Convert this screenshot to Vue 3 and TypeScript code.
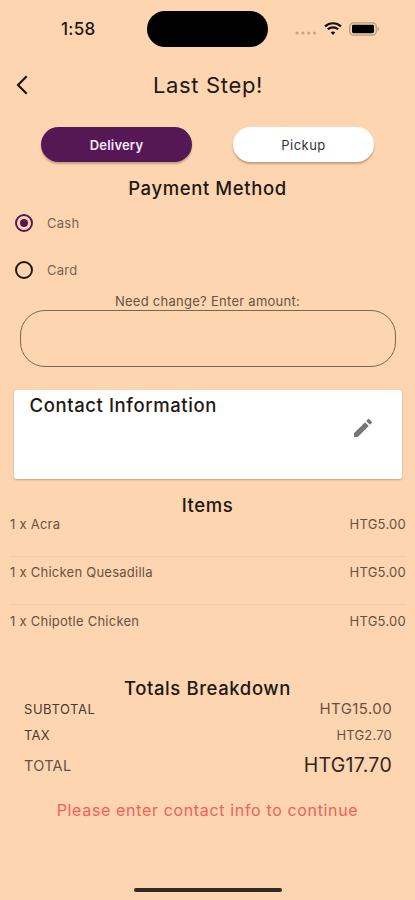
<script setup lang="ts">
import { ref } from 'vue'

interface Line {
  id: number
  qty: number
  name: string
  price: string
}

const fulfilment = ref<'delivery' | 'pickup'>('delivery')
const payment = ref<string>('Cash')
const amount = ref('')
const methods: string[] = ['Cash', 'Card']
const items: Line[] = [
  { id: 1, qty: 1, name: 'Acra', price: 'HTG5.00' },
  { id: 2, qty: 1, name: 'Chicken Quesadilla', price: 'HTG5.00' },
  { id: 3, qty: 1, name: 'Chipotle Chicken', price: 'HTG5.00' },
]
</script>

<template>
  <main class="screen">
    <div class="status">
      <span class="time">1:58</span>
      <div class="island"></div>
      <div class="signals">
        <svg class="dots" width="22" height="4" viewBox="0 0 22 4">
          <circle v-for="n in 4" :key="n" :cx="n * 5.8 - 3.7" cy="2" r="1.6" />
        </svg>
        <svg class="wifi" width="18" height="13" viewBox="0 0 18 13">
          <path d="M1 4.4a11.8 11.8 0 0 1 16 0" />
          <path d="M3.8 7.3a7.7 7.7 0 0 1 10.4 0" />
          <path class="solid" d="M9 12.9 6.7 10.6a3.3 3.3 0 0 1 4.6 0z" />
        </svg>
        <svg class="battery" width="31" height="14" viewBox="0 0 31 14">
          <rect class="shell" x=".8" y=".8" width="26.4" height="12.4" rx="3.6" />
          <rect x="3" y="2.8" width="22" height="8.4" rx="1.4" />
          <path class="cap" d="M28.5 4.8c2.4.8 2.4 3.6 0 4.4z" />
        </svg>
      </div>
    </div>

    <header class="topbar">
      <button class="back" aria-label="Back">
        <svg width="12" height="20" viewBox="0 0 12 20"><path d="M10.7 1.3 2 10l8.7 8.7" /></svg>
      </button>
      <h1>Last Step!</h1>
    </header>

    <div class="toggle">
      <button class="pill delivery" :class="{ on: fulfilment === 'delivery' }" @click="fulfilment = 'delivery'">Delivery</button>
      <button class="pill pickup" :class="{ on: fulfilment === 'pickup' }" @click="fulfilment = 'pickup'">Pickup</button>
    </div>

    <h2 class="payment-title">Payment Method</h2>
    <div class="methods">
      <div v-for="m in methods" :key="m" class="method" @click="payment = m">
        <span class="radio" :class="{ checked: payment === m }"></span>
        <span>{{ m }}</span>
      </div>
    </div>

    <label class="change" for="amount"><span>Need change? Enter amount:</span></label>
    <input id="amount" v-model="amount" class="amount" type="text" />

    <section class="contact">
      <h2>Contact Information</h2>
      <svg class="pencil" width="24" height="24" viewBox="0 0 24 24">
        <path d="M3 17.25V21h3.75L17.81 9.94l-3.75-3.75L3 17.25zM20.71 7.04a1 1 0 0 0 0-1.41l-2.34-2.34a1 1 0 0 0-1.41 0l-1.83 1.83 3.75 3.75 1.83-1.83z" />
      </svg>
    </section>

    <h2 class="items-title">Items</h2>
    <ul class="items">
      <li v-for="item in items" :key="item.id">
        <span class="name">{{ item.qty }} x {{ item.name }}</span>
        <span class="price">{{ item.price }}</span>
      </li>
    </ul>

    <h2 class="totals-title">Totals Breakdown</h2>
    <dl class="totals">
      <div class="row subtotal"><dt>SUBTOTAL</dt><dd>HTG15.00</dd></div>
      <div class="row tax"><dt>TAX</dt><dd>HTG2.70</dd></div>
      <div class="row total"><dt>TOTAL</dt><dd>HTG17.70</dd></div>
    </dl>

    <p class="warning"><span>Please enter contact info to continue</span></p>
    <div class="home"></div>
  </main>
</template>

<style>
body {
  margin: 0;
  background: #fdd5b1;
}
</style>

<style scoped>
* {
  box-sizing: border-box;
}
.screen {
  width: 415px;
  height: 900px;
  display: flex;
  flex-direction: column;
  overflow: hidden;
  background: #fdd5b1;
  color: #211913;
  font-family: Inter, "Liberation Sans", sans-serif;
}
h1, h2, p, dl, dd, ul {
  margin: 0;
  padding: 0;
}
h1, h2 {
  white-space: nowrap;
}
h2 {
  font-size: 18.5px;
  line-height: 22px;
  font-weight: 450;
  letter-spacing: 0.6px;
}
button {
  border: 0;
  padding: 0;
  background: none;
  font-family: inherit;
}
.status {
  height: 58px;
  flex: none;
  display: grid;
  grid-template-columns: 147px 121px 1fr;
  align-items: center;
}
.time {
  padding-left: 61px;
  font-size: 17px;
  font-weight: 500;
  letter-spacing: 0.3px;
}
.island {
  height: 36px;
  border-radius: 18px;
  background: #000;
}
.signals {
  display: flex;
  align-items: center;
  padding-left: 27px;
}
.dots {
  fill: #c6a488;
  margin-top: 8px;
}
.wifi {
  margin-left: 7px;
  margin-top: -2px;
  fill: none;
  stroke: #17110c;
  stroke-width: 2.2;
}
.wifi .solid {
  fill: #17110c;
  stroke: none;
}
.battery {
  margin-left: 7px;
  margin-top: -1px;
}
.battery .shell {
  fill: none;
  stroke: #b59a82;
  stroke-width: 1.3;
}
.battery .cap {
  fill: #c6a488;
}
.topbar {
  height: 54px;
  flex: none;
  display: grid;
  grid-template-columns: 40px 1fr 40px;
  align-items: center;
}
.back {
  display: flex;
  padding-left: 16px;
}
.back path {
  fill: none;
  stroke: #17110c;
  stroke-width: 2.1;
}
h1 {
  padding-left: 1px;
  text-align: center;
  font-size: 22px;
  line-height: 28px;
  font-weight: 400;
  letter-spacing: 0.65px;
}
.toggle {
  height: 65px;
  flex: none;
  display: flex;
  justify-content: space-between;
  padding: 15px 41px 0;
}
.pill {
  height: 35px;
  border-radius: 18px;
  background: #fff;
  color: #333;
  font-size: 13px;
  line-height: 34px;
  font-weight: 400;
  letter-spacing: 0.45px;
  box-shadow: 0 2px 2px rgba(80, 45, 20, 0.32);
}
.pill.on {
  background: #561855;
  color: #f7e9f7;
  font-weight: 600;
  letter-spacing: 0.2px;
}
.delivery {
  width: 151px;
}
.pickup {
  width: 141px;
}
.payment-title {
  text-align: center;
}
.methods {
  flex: none;
  height: 93px;
  margin-top: 1px;
}
.method {
  height: 46.5px;
  display: flex;
  align-items: center;
  gap: 14px;
  padding-left: 15px;
  color: #796451;
  font-size: 13px;
  letter-spacing: 0.25px;
}
.radio {
  width: 18px;
  height: 18px;
  display: grid;
  place-items: center;
  border: 2px solid #211913;
  border-radius: 50%;
}
.radio.checked {
  border-color: #561855;
}
.radio.checked::after {
  content: "";
  width: 8px;
  height: 8px;
  border-radius: 50%;
  background: #561855;
}
.change {
  height: 17px;
  flex: none;
  text-align: center;
  font-size: 13px;
  line-height: 16px;
  letter-spacing: 0.27px;
  color: #675343;
}
.amount {
  flex: none;
  width: 376px;
  height: 57px;
  margin: 0 0 0 20px;
  padding: 0 20px;
  border: 1px solid #7b6450;
  border-radius: 25px;
  background: transparent;
  outline: none;
  font: inherit;
}
.contact {
  flex: none;
  display: flex;
  justify-content: space-between;
  margin: 23px 13px 0 14px;
  height: 89px;
  padding: 4px 27px 0 15.5px;
  border-radius: 3px;
  background: #fff;
  box-shadow: 0 1px 2px rgba(90, 50, 20, 0.3);
}
.pencil {
  margin-top: 22px;
  fill: #757575;
}
.items-title {
  margin-top: 15px;
  text-align: center;
}
.items {
  list-style: none;
  padding: 0 9px 0 10px;
}
.items li {
  height: 41px;
  margin-bottom: 7.4px;
  display: flex;
  justify-content: space-between;
  font-size: 13px;
  line-height: 16px;
  color: #675343;
}
.items li:not(:last-child) {
  border-bottom: 1px solid #f1cba9;
}
.name {
  letter-spacing: 0.25px;
}
.price {
  letter-spacing: 0.25px;
}
.totals-title {
  margin-top: 16px;
  text-align: center;
}
.totals {
  padding: 0 23px 0 24px;
}
.row {
  display: flex;
  justify-content: space-between;
  align-items: center;
}
.row dt {
  font-size: 13px;
  color: #4a3b30;
  letter-spacing: 0.3px;
}
.row dd {
  color: #675343;
}
.subtotal {
  height: 19px;
}
.subtotal dt {
  letter-spacing: 0.55px;
}
.subtotal dd {
  font-size: 15px;
  letter-spacing: 0.4px;
}
.tax {
  height: 34px;
}
.tax dd {
  font-size: 13px;
  letter-spacing: 0.2px;
}
.total {
  height: 26px;
}
.total dt {
  font-size: 14.5px;
  color: #675343;
}
.total dd {
  font-size: 19.5px;
  letter-spacing: 0.3px;
  color: #322720;
}
.warning {
  margin-top: 21px;
  text-align: center;
  font-size: 16px;
  line-height: 22px;
  letter-spacing: 0.65px;
  color: #f2605a;
}
.home {
  flex: none;
  align-self: center;
  width: 148px;
  height: 4px;
  margin-top: auto;
  margin-bottom: 8px;
  border-radius: 2px;
  background: #33281f;
}
</style>
